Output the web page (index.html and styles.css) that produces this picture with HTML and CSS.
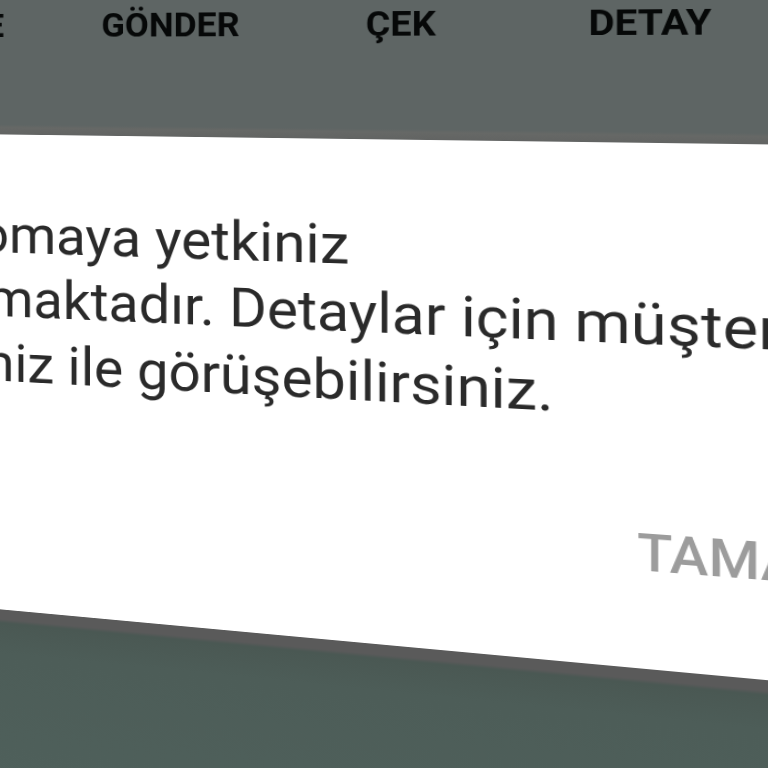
FILE: index.html
```html
<!DOCTYPE html>
<html lang="tr">
<head>
<meta charset="utf-8">
<title>Yetki uyarısı</title>
<link rel="stylesheet" href="styles.css">
</head>
<body>
<main class="stage">
  <nav class="tabs">
    <span class="tab tab-cut">E</span>
    <span class="tab">GÖNDER</span>
    <span class="tab">ÇEK</span>
    <span class="tab">DETAY</span>
  </nav>
  <section class="card">
    <p class="line line-first">omaya yetkiniz</p>
    <p class="line line-second">maktadır. Detaylar için müşter</p>
    <p class="line line-third">niz ile görüşebilirsiniz.</p>
    <div class="action">TAMA</div>
  </section>
  <div class="below"></div>
</main>
</body>
</html>
```

FILE: styles.css
```css
html, body {
  margin: 0;
  width: 768px;
  height: 768px;
  overflow: hidden;
  background: #5e6564;
}

.stage {
  width: 1100px;
  display: flex;
  flex-direction: column;
  font-family: Roboto, "Liberation Sans", sans-serif;
  transform-origin: 0 0;
  transform: matrix3d(0.886, -0.00836, 0, -0.000148, 0, 0.886, 0, 0, 0, 0, 1, 0, 0, -10, 0, 1) translateX(-170px);
  filter: blur(0.35px);
}

.tabs {
  display: flex;
  height: 162.5px;
  box-sizing: border-box;
  padding-top: 20px;
  background: linear-gradient(#5e6564 0, #5e6564 152px, #666866 155px, #626463 162.5px);
}

.tab {
  flex: 0 0 237.5px;
  text-align: center;
  font-size: 37.5px;
  line-height: 40px;
  font-weight: 700;
  color: #060808;
}

.tab-cut {
  box-sizing: border-box;
  padding-right: 63px;
  text-align: right;
}

.card {
  height: 536px;
  box-sizing: border-box;
  padding-top: 77.4px;
  background: #fff;
}

.line {
  margin: 0;
  font-size: 60px;
  line-height: 72.5px;
  color: #2a2a2a;
  white-space: nowrap;
}

.line-first { padding-left: 146px; }
.line-second { padding-left: 155px; }
.line-third { padding-left: 153px; }

.action {
  margin-top: 87.8px;
  padding-left: 820px;
  font-size: 53px;
  line-height: 72.5px;
  font-weight: 500;
  color: #9c9c9c;
  white-space: nowrap;
}

.below {
  height: 300px;
  background: linear-gradient(#5a5a5a 0, #5a5a5a 11px, #4a5853 15px, #4d5d58 50px, #50625d 100%);
}
```
